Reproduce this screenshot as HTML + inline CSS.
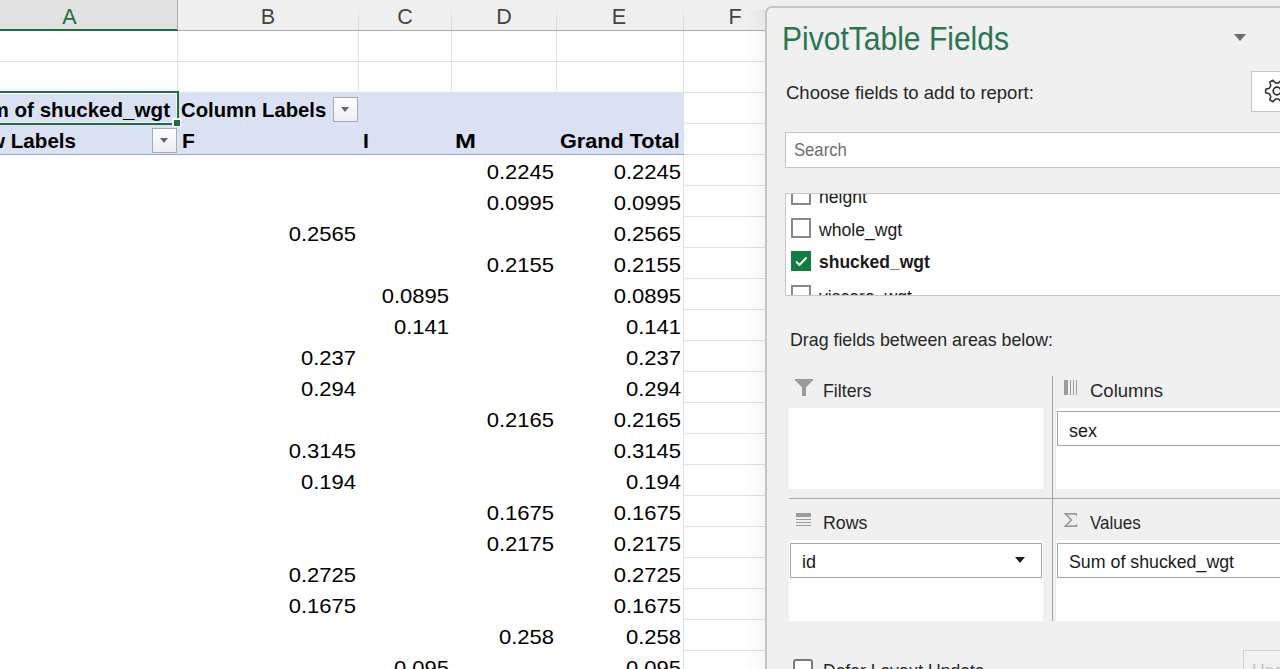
<!DOCTYPE html>
<html><head><meta charset="utf-8"><style>
*{margin:0;padding:0;box-sizing:border-box}
html,body{width:1280px;height:669px;overflow:hidden;background:#fff}
body{position:relative;font-family:"Liberation Sans",sans-serif}
.a{position:absolute}
.t{position:absolute;white-space:pre;line-height:1}
.hl{position:absolute;height:1px;background:#e1e1e1}
.vl{position:absolute;width:1px;background:#e1e1e1}
.chl{position:absolute;font-size:21.5px;color:#444;line-height:1}
.n{position:absolute;font-size:20.4px;color:#000;line-height:1;text-align:right;white-space:pre;width:80px;transform:scaleX(1.08);transform-origin:100% 0}
.b{font-weight:bold}
.dd{position:absolute;width:25px;height:25px;border:1px solid #a9abaf;background:linear-gradient(#fefefe,#eceef3)}
.dd:after{content:"";position:absolute;left:7px;top:9px;border-left:4.5px solid transparent;border-right:4.5px solid transparent;border-top:5px solid #666}
</style></head><body>
<div class="a" style="left:0;top:0;width:1280px;height:30px;background:#efefef"></div>
<div class="a" style="left:0;top:0;width:177px;height:29px;background:#e1e1e1"></div>
<div class="a" style="left:0;top:30px;width:1280px;height:1px;background:#ababab"></div>
<div class="a" style="left:0;top:29px;width:178px;height:2px;background:#1e6e42"></div>
<div class="a" style="left:177px;top:0;width:1px;height:30px;background:#ababab"></div>
<div class="a" style="left:358px;top:2px;width:1px;height:28px;background:linear-gradient(#efefef,#d6d6d6)"></div>
<div class="a" style="left:451px;top:2px;width:1px;height:28px;background:linear-gradient(#efefef,#d6d6d6)"></div>
<div class="a" style="left:556px;top:2px;width:1px;height:28px;background:linear-gradient(#efefef,#d6d6d6)"></div>
<div class="a" style="left:683px;top:2px;width:1px;height:28px;background:linear-gradient(#efefef,#d6d6d6)"></div>
<div class="a" style="left:787px;top:2px;width:1px;height:28px;background:linear-gradient(#efefef,#d6d6d6)"></div>
<div class="chl" style="left:29.5px;top:7px;width:80px;text-align:center;color:#1e6e42">A</div>
<div class="chl" style="left:228px;top:7px;width:80px;text-align:center;color:#444">B</div>
<div class="chl" style="left:365px;top:7px;width:80px;text-align:center;color:#444">C</div>
<div class="chl" style="left:464px;top:7px;width:80px;text-align:center;color:#444">D</div>
<div class="chl" style="left:579px;top:7px;width:80px;text-align:center;color:#444">E</div>
<div class="chl" style="left:695px;top:7px;width:80px;text-align:center;color:#444">F</div>
<div class="hl" style="left:0;top:61px;width:765px"></div>
<div class="hl" style="left:0;top:92px;width:765px"></div>
<div class="vl" style="left:177px;top:31px;height:61px"></div>
<div class="vl" style="left:358px;top:31px;height:61px"></div>
<div class="vl" style="left:451px;top:31px;height:61px"></div>
<div class="vl" style="left:556px;top:31px;height:61px"></div>
<div class="vl" style="left:683px;top:31px;height:638px"></div>
<div class="hl" style="left:684px;top:123px;width:81px"></div>
<div class="hl" style="left:684px;top:154px;width:81px"></div>
<div class="hl" style="left:684px;top:185px;width:81px"></div>
<div class="hl" style="left:684px;top:216px;width:81px"></div>
<div class="hl" style="left:684px;top:247px;width:81px"></div>
<div class="hl" style="left:684px;top:278px;width:81px"></div>
<div class="hl" style="left:684px;top:309px;width:81px"></div>
<div class="hl" style="left:684px;top:340px;width:81px"></div>
<div class="hl" style="left:684px;top:371px;width:81px"></div>
<div class="hl" style="left:684px;top:402px;width:81px"></div>
<div class="hl" style="left:684px;top:433px;width:81px"></div>
<div class="hl" style="left:684px;top:464px;width:81px"></div>
<div class="hl" style="left:684px;top:495px;width:81px"></div>
<div class="hl" style="left:684px;top:526px;width:81px"></div>
<div class="hl" style="left:684px;top:557px;width:81px"></div>
<div class="hl" style="left:684px;top:588px;width:81px"></div>
<div class="hl" style="left:684px;top:619px;width:81px"></div>
<div class="hl" style="left:684px;top:650px;width:81px"></div>
<div class="a" style="left:0;top:92px;width:684px;height:62px;background:#d9e1f2"></div>
<div class="a" style="left:0;top:154px;width:684px;height:1px;background:#8ea9db"></div>
<div class="t b" style="left:-100px;top:99px;font-size:21px;width:270px;text-align:right;transform:scaleX(0.98);transform-origin:100% 0">Sum of shucked_wgt</div>
<div class="t b" style="left:181px;top:99px;font-size:21px;transform:scaleX(0.965);transform-origin:0 0">Column Labels</div>
<div class="dd" style="left:333px;top:97px"></div>
<div class="t b" style="left:-100px;top:130px;font-size:21px;width:176px;text-align:right;transform:scaleX(0.98);transform-origin:100% 0">Row Labels</div>
<div class="dd" style="left:152px;top:128px"></div>
<div class="t b" style="left:182px;top:130px;font-size:21px">F</div>
<div class="t b" style="left:363px;top:130px;font-size:21px">I</div>
<div class="t b" style="left:455px;top:130px;font-size:21px;transform:scaleX(1.2);transform-origin:0 0">M</div>
<div class="t b" style="left:560px;top:130px;font-size:21px;transform:scaleX(1.03);transform-origin:0 0">Grand Total</div>
<div class="a" style="left:-10px;top:91px;width:189px;height:34px;border:2px solid #1e6e42"></div>
<div class="a" style="left:-10px;top:93px;width:187px;height:30px;border:1px solid #fff;border-left:none"></div>
<div class="a" style="left:172px;top:118px;width:9px;height:9px;background:#fff"></div>
<div class="a" style="left:174px;top:120px;width:6px;height:6px;background:#1e6e42"></div>
<div class="n" style="left:474px;top:162px">0.2245</div>
<div class="n" style="left:601px;top:162px">0.2245</div>
<div class="n" style="left:474px;top:193px">0.0995</div>
<div class="n" style="left:601px;top:193px">0.0995</div>
<div class="n" style="left:276px;top:224px">0.2565</div>
<div class="n" style="left:601px;top:224px">0.2565</div>
<div class="n" style="left:474px;top:255px">0.2155</div>
<div class="n" style="left:601px;top:255px">0.2155</div>
<div class="n" style="left:369px;top:286px">0.0895</div>
<div class="n" style="left:601px;top:286px">0.0895</div>
<div class="n" style="left:369px;top:317px">0.141</div>
<div class="n" style="left:601px;top:317px">0.141</div>
<div class="n" style="left:276px;top:348px">0.237</div>
<div class="n" style="left:601px;top:348px">0.237</div>
<div class="n" style="left:276px;top:379px">0.294</div>
<div class="n" style="left:601px;top:379px">0.294</div>
<div class="n" style="left:474px;top:410px">0.2165</div>
<div class="n" style="left:601px;top:410px">0.2165</div>
<div class="n" style="left:276px;top:441px">0.3145</div>
<div class="n" style="left:601px;top:441px">0.3145</div>
<div class="n" style="left:276px;top:472px">0.194</div>
<div class="n" style="left:601px;top:472px">0.194</div>
<div class="n" style="left:474px;top:503px">0.1675</div>
<div class="n" style="left:601px;top:503px">0.1675</div>
<div class="n" style="left:474px;top:534px">0.2175</div>
<div class="n" style="left:601px;top:534px">0.2175</div>
<div class="n" style="left:276px;top:565px">0.2725</div>
<div class="n" style="left:601px;top:565px">0.2725</div>
<div class="n" style="left:276px;top:596px">0.1675</div>
<div class="n" style="left:601px;top:596px">0.1675</div>
<div class="n" style="left:474px;top:627px">0.258</div>
<div class="n" style="left:601px;top:627px">0.258</div>
<div class="n" style="left:369px;top:658px">0.095</div>
<div class="n" style="left:601px;top:658px">0.095</div>
<div class="a" style="left:745px;top:10px;width:20px;height:659px;background:linear-gradient(90deg,rgba(0,0,0,0),rgba(0,0,0,0.03))"></div>
<div class="a" style="left:765px;top:6px;width:530px;height:680px;background:#f0f0f0;border:2px solid #c6c5c3;border-right:none;border-radius:7px 0 0 0"></div>
<div class="t" style="left:781.5px;top:22px;font-size:33px;color:#2a7650;transform:scaleX(0.91);transform-origin:0 0">PivotTable Fields</div>
<div class="a" style="left:1234px;top:34px;width:0;height:0;border-left:6.5px solid transparent;border-right:6.5px solid transparent;border-top:7px solid #6d6d6d"></div>
<div class="t" style="left:786px;top:84px;font-size:18.5px;color:#262626">Choose fields to add to report:</div>
<div class="a" style="left:1251px;top:71px;width:40px;height:41px;background:#fff;border:1px solid #c6c6c6"></div>
<svg class="a" style="left:1260px;top:74px" width="34" height="34" viewBox="0 0 34 34"><path d="M9.25 19.67 L5.64 18.80 L5.64 15.20 L9.25 14.33 L10.81 11.62 L9.76 8.06 L12.88 6.26 L15.44 8.95 L18.56 8.95 L21.12 6.26 L24.24 8.06 L23.19 11.62 L24.75 14.33 L28.36 15.20 L28.36 18.80 L24.75 19.67 L23.19 22.38 L24.24 25.94 L21.12 27.74 L18.56 25.05 L15.44 25.05 L12.88 27.74 L9.76 25.94 L10.81 22.38 Z" fill="none" stroke="#2b2b2b" stroke-width="1.5" stroke-linejoin="round"/><circle cx="17" cy="17" r="3.8" fill="none" stroke="#2b2b2b" stroke-width="1.7"/></svg>
<div class="a" style="left:785px;top:132px;width:520px;height:36px;background:#fff;border:1px solid #c6c6c6"></div>
<div class="t" style="left:794px;top:141px;font-size:18.5px;color:#6d6d6d;transform:scaleX(0.9);transform-origin:0 0">Search</div>
<div class="a" style="left:785px;top:193px;width:520px;height:103px;background:#fff;border:1px solid #c6c6c6;overflow:hidden">
<div class="a" style="left:5px;top:-9px;width:20px;height:20px;border:2px solid #888;background:#fff"></div>
<div class="t" style="left:33px;top:-5.5px;font-size:17.6px;color:#1a1a1a">height</div>
<div class="a" style="left:5px;top:24px;width:20px;height:20px;border:2px solid #888;background:#fff"></div>
<div class="t" style="left:33px;top:27.5px;font-size:17.6px;color:#1a1a1a">whole_wgt</div>
<div class="a" style="left:5px;top:57px;width:20px;height:20px;background:#107c41"></div>
<svg class="a" style="left:5px;top:57px" width="20" height="20" viewBox="0 0 20 20"><path d="M5 10.5 L8.5 14 L15.5 6.5" fill="none" stroke="#fff" stroke-width="1.9"/></svg>
<div class="t b" style="left:33px;top:60px;font-size:17.5px;color:#1a1a1a">shucked_wgt</div>
<div class="a" style="left:5px;top:91px;width:20px;height:20px;border:2px solid #888;background:#fff"></div>
<div class="t" style="left:33px;top:94.5px;font-size:17.6px;color:#1a1a1a">viscera_wgt</div>
</div>
<div class="t" style="left:790px;top:332px;font-size:17.8px;color:#262626">Drag fields between areas below:</div>
<div class="a" style="left:1052px;top:376px;width:1px;height:245px;background:#a6a6a6"></div>
<div class="a" style="left:789px;top:498px;width:500px;height:1px;background:#a6a6a6"></div>
<div class="a" style="left:789px;top:408px;width:254px;height:81px;background:#fff"></div>
<div class="a" style="left:1056px;top:408px;width:240px;height:81px;background:#fff"></div>
<div class="a" style="left:789px;top:540px;width:254px;height:81px;background:#fff"></div>
<div class="a" style="left:1056px;top:540px;width:240px;height:81px;background:#fff"></div>
<svg class="a" style="left:794px;top:378px" width="20" height="20" viewBox="0 0 20 20"><path d="M1 1 H19 V2.3 L12 9.3 V18 H8 V9.3 L1 2.3 Z" fill="#9b9b9b"/></svg>
<svg class="a" style="left:1063px;top:379px" width="16" height="17" viewBox="0 0 16 17"><rect x="1" y="1" width="4" height="15" fill="#9b9b9b"/><rect x="7" y="1" width="1" height="15" fill="#9b9b9b"/><rect x="10" y="1" width="1" height="15" fill="#9b9b9b"/><rect x="13" y="1" width="1" height="15" fill="#9b9b9b"/></svg>
<svg class="a" style="left:795px;top:512px" width="17" height="16" viewBox="0 0 17 16"><rect x="1" y="1" width="15" height="4" fill="#9b9b9b"/><rect x="1" y="7" width="15" height="1" fill="#9b9b9b"/><rect x="1" y="10" width="15" height="1" fill="#9b9b9b"/><rect x="1" y="13" width="15" height="1" fill="#9b9b9b"/></svg>
<svg class="a" style="left:1063px;top:512px" width="16" height="16" viewBox="0 0 16 16"><path d="M1 1 L14 1 L14 4.3 L13.2 4.3 L12.7 2.8 L4.4 2.8 L9.6 8 L4.2 13.2 L12.8 13.2 L13.3 11.7 L14.2 11.7 L14.2 15 L1 15 L1 14.2 L7.3 8 L1 1.8 Z" fill="#9b9b9b"/></svg>
<div class="t" style="left:823px;top:382px;font-size:18.5px;color:#262626;transform:scaleX(0.96);transform-origin:0 0">Filters</div>
<div class="t" style="left:1090px;top:382px;font-size:18.5px;color:#262626">Columns</div>
<div class="t" style="left:823px;top:514px;font-size:18.5px;color:#262626;transform:scaleX(0.96);transform-origin:0 0">Rows</div>
<div class="t" style="left:1090px;top:514px;font-size:18.5px;color:#262626;transform:scaleX(0.92);transform-origin:0 0">Values</div>
<div class="a" style="left:1057px;top:411px;width:240px;height:35px;background:#fff;border:1px solid #a6a6a6"></div>
<div class="t" style="left:1069px;top:422px;font-size:18px;color:#1a1a1a">sex</div>
<div class="a" style="left:790px;top:543px;width:252px;height:35px;background:#fff;border:1px solid #a6a6a6"></div>
<div class="t" style="left:802px;top:553px;font-size:18px;color:#1a1a1a">id</div>
<div class="a" style="left:1015px;top:557px;width:0;height:0;border-left:5.5px solid transparent;border-right:5.5px solid transparent;border-top:6.5px solid #1f1f1f"></div>
<div class="a" style="left:1057px;top:543px;width:240px;height:35px;background:#fff;border:1px solid #a6a6a6"></div>
<div class="t" style="left:1069px;top:554px;font-size:17.8px;color:#1a1a1a">Sum of shucked_wgt</div>
<div class="a" style="left:793px;top:659px;width:20px;height:20px;border:2px solid #7a7a7a;border-radius:3px;background:#fff"></div>
<div class="t" style="left:823px;top:663px;font-size:17.5px;color:#262626">Defer Layout Update</div>
<div class="a" style="left:1243px;top:650px;width:60px;height:30px;border:1px solid #d0d0d0;background:#f1f1f1"></div>
<div class="t" style="left:1252px;top:663px;font-size:17.5px;color:#c4c4c4">Update</div>
</body></html>
